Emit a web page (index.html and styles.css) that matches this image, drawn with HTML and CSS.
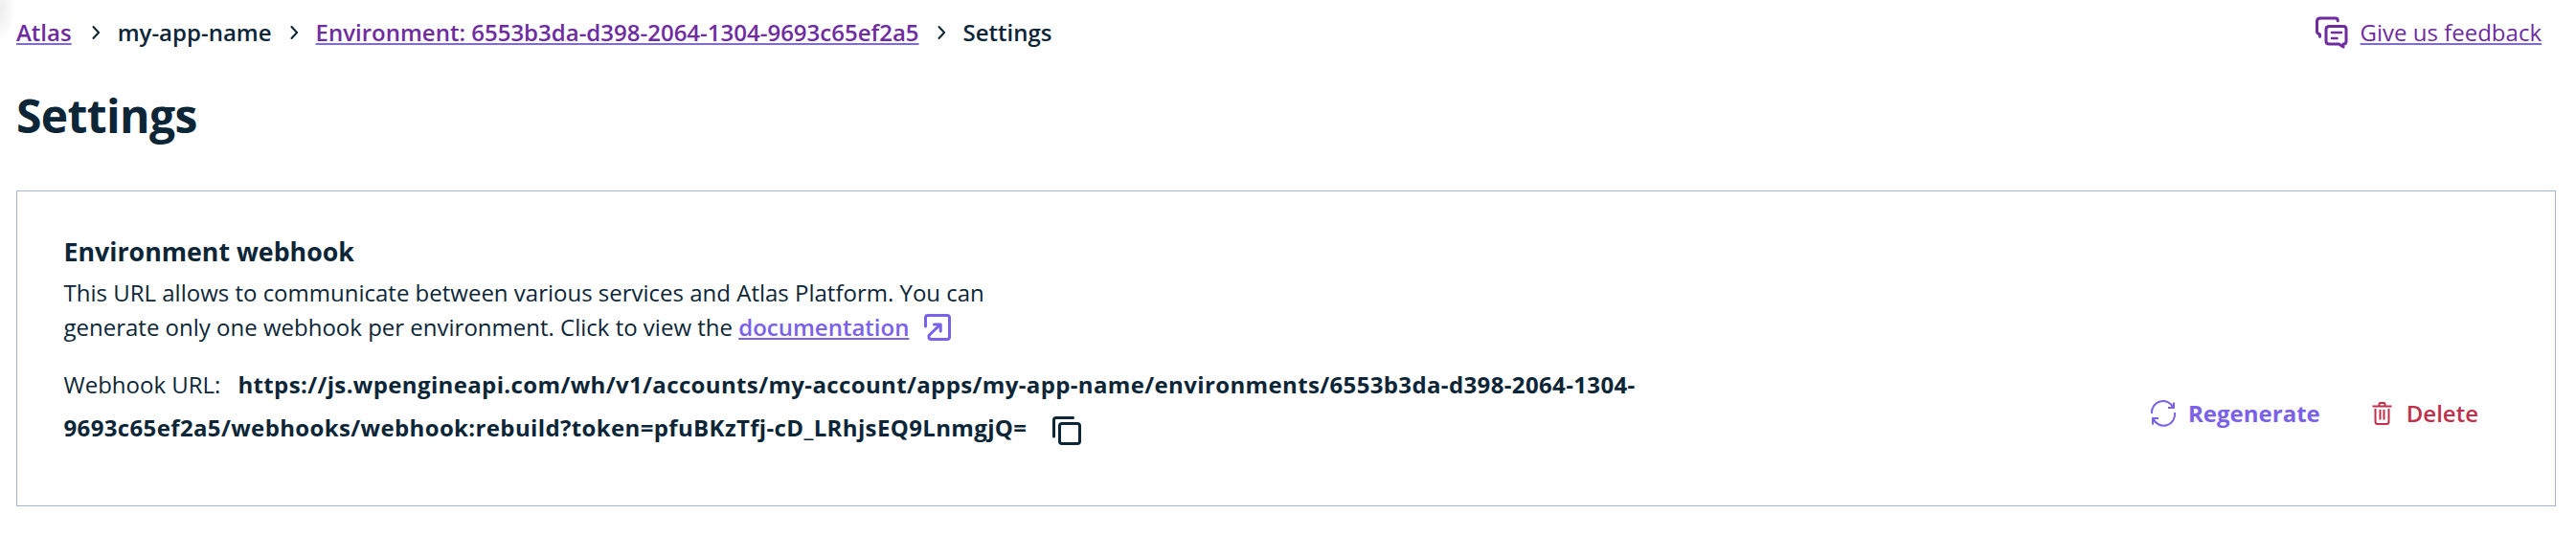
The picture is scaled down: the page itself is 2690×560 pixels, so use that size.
FILE: index.html
```html
<!DOCTYPE html>
<html lang="en">
<head>
<meta charset="utf-8">
<title>Settings</title>
<link rel="stylesheet" href="styles.css">
</head>
<body>
<header class="topbar">
  <nav class="crumbs">
    <a href="#">Atlas</a>
    <svg class="chev first" viewBox="0 0 9 14"><path d="M1.5 1l5.6 6-5.6 6"/></svg>
    <span>my-app-name</span>
    <svg class="chev" viewBox="0 0 9 14"><path d="M1.5 1l5.6 6-5.6 6"/></svg>
    <a href="#">Environment: 6553b3da-d398-2064-1304-9693c65ef2a5</a>
    <svg class="chev" viewBox="0 0 9 14"><path d="M1.5 1l5.6 6-5.6 6"/></svg>
    <span>Settings</span>
  </nav>
  <a class="feedback" href="#">
    <svg class="chat" viewBox="0 0 34 34"><path d="M23.2 4.8V4.2Q23.2 2 21 2H5Q1.5 2 1.5 5.5V15.5Q1.5 18 4.5 19V21.2"/><path d="M14.5 10.5H29Q32 10.5 32 13.5V26Q32 29 29 29V32L24.5 29H14.5Q11 29 11 26V13.5Q11 10.5 14.5 10.5Z"/><path d="M17 17H27M17 23H22.5" stroke-width="2.5"/></svg>
    <span>Give us feedback</span>
  </a>
</header>
<h1 class="title">Settings</h1>
<section class="card">
  <div class="info">
    <h2 class="subtitle">Environment webhook</h2>
    <p class="desc">This URL allows to communicate between various services and Atlas Platform. You can<br>generate only one webhook per environment. Click to view the <a href="#">documentation</a><svg class="ext" viewBox="0 0 28 28"><path d="M1.500 13V4Q1.500 1.500 4 1.500H24Q26.500 1.500 26.500 4V24Q26.500 26.500 24 26.500H7.500Q5 26.500 5 24V22.500L17 11M10.500 11H17.200V18"/></svg></p>
    <p class="url"><span class="label">Webhook URL:</span><b>https://js.wpengineapi.com/wh/v1/accounts/my-account/apps/my-app-name/environments/6553b3da-d398-2064-1304-<br>9693c65ef2a5/webhooks/webhook:rebuild?token=pfuBKzTfj-cD_LRhjsEQ9LnmgjQ=</b><svg class="copy" viewBox="0 0 30 30"><path d="M1.500 21V4Q1.500 1.500 4 1.500H21.500"/><rect x="7.500" y="7.500" width="21" height="21" rx="2.500"/></svg></p>
  </div>
  <div class="actions">
    <a class="regen"><svg class="sync" viewBox="0 0 26 26"><path d="M1 13A11.800 11.800 0 0 1 23.500 7M18 7H24V1.500M25 12A11.800 11.800 0 0 1 2.500 18.500M2 24.500V18H8"/></svg><span>Regenerate</span></a>
    <a class="del"><svg class="trash" viewBox="0 0 20 24"><path d="M0 4.500H20M7 4V2Q7 1 8 1H12Q13 1 13 2V4M3 7V20.500Q3 23 5.500 23H14.500Q17 23 17 20.500V7M8 8V18.500M12 8V18.500"/></svg><span>Delete</span></a>
  </div>
</section>
</body>
</html>
```
FILE: styles.css
```css
* { box-sizing: border-box; }
body { margin: 0; padding: 17px 21px 31px 17px; height: 560px; background: radial-gradient(ellipse 16px 34px at 0 10px, #ededed, #fff) #fff; color: #0c2638; font: 24px/36px "Open Sans", sans-serif; }
h1, h2, p { margin: 0; }
svg { fill: none; stroke: currentColor; stroke-width: 3; stroke-linecap: round; stroke-linejoin: round; flex: none; overflow: visible; }
.topbar { display: flex; justify-content: space-between; height: 34px; padding-right: 15px; align-items: center; }
.crumbs { display: flex; align-items: center; font-weight: 600; }
.crumbs a, .feedback { color: #6e2ca0; text-decoration: none; }
.crumbs a, .feedback span { text-decoration: underline #7b68ee 2px; text-underline-offset: 2px; text-decoration-skip-ink: none; }
.chev { width: 9px; height: 14px; margin: 0 18px 0 19px; stroke-width: 2; }
.chev.first { margin-left: 21px; }
.feedback { display: flex; align-items: center; gap: 13px; }
.chat { width: 34px; height: 34px; stroke-width: 3; }
.title { font-size: 48px; line-height: 64px; margin-top: 38px; font-weight: 700; letter-spacing: -0.6px; }
.card { margin-top: 46px; height: 330px; border: 1px solid #a3b5cf; padding: 43px 80px 0 48.5px; display: flex; justify-content: space-between; }
.subtitle { font-size: 26.75px; line-height: 40px; }
.desc { margin-top: 5px; }
.desc a { color: #7b61ea; font-weight: 600; text-decoration: underline 2px; text-underline-offset: 2px; }
.ext { width: 28px; height: 28px; margin-left: 16px; color: #7b61ea; vertical-align: -5px; }
.url { margin-top: 19px; line-height: 45px; }
.url b { letter-spacing: 0.36px; }
.label { margin-right: 18px; }
.copy { width: 30px; height: 30px; margin-left: 27px; vertical-align: -9px; }
.actions { display: flex; gap: 54px; align-self: flex-start; margin-top: 171px; font-weight: 700; }
.actions a { display: flex; align-items: center; gap: 13px; }
.regen { color: #7b61ea; }
.actions .del { gap: 15px; color: #c13049; font-weight: 600; }
.sync { width: 26px; height: 26px; stroke-width: 2; stroke-linecap: butt; }
.trash { width: 21px; height: 24px; stroke-width: 2; stroke-linecap: butt; }
```
